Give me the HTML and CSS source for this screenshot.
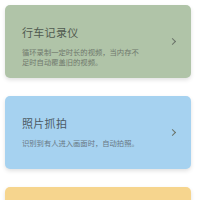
FILE: index.html
```html
<!DOCTYPE html>
<html lang="zh">
<head>
    <meta charset="UTF-8" />
    <title>功能</title>
    <link rel="stylesheet" href="styles.css">
</head>
<body>
<div class="list">
    <div class="card card-green">
        <div class="card-text">
            <h3>行车记录仪</h3>
            <p>循环录制一定时长的视频，当内存不足时自动覆盖旧的视频。</p>
        </div>
        <span class="arrow"></span>
    </div>

    <div class="card card-blue">
        <div class="card-text">
            <h3>照片抓拍</h3>
            <p>识别到有人进入画面时，自动拍照。</p>
        </div>
        <span class="arrow"></span>
    </div>

    <div class="card card-yellow">
        <div class="card-text">
            <h3>&nbsp;</h3>
        </div>
    </div>
</div>
</body>
</html>
```

FILE: styles.css
```css
body {
    margin: 0;
    background: #ffffff;
    font-family: "Noto Sans CJK SC", "Noto Sans", sans-serif;
    overflow: hidden;
}

.list {
    display: flex;
    flex-direction: column;
    gap: 18px;
    padding: 5px 9px 0 5px;
}

.card {
    height: 73px;
    box-sizing: border-box;
    border-radius: 5px;
    padding: 20px 0 0 17px;
    display: flex;
    position: relative;
    box-shadow: 0 2px 4px rgba(0, 0, 0, 0.12);
}

.card-green { background: #b0c4a8; }
.card-blue { background: #a6d2f0; }
.card-yellow { background: #f6d58e; }

.card-text h3 {
    margin: 0;
    font-size: 11px;
    line-height: 14px;
    font-weight: normal;
    color: #505a50;
    letter-spacing: 0.3px;
}

.card-text p {
    margin: 8px 0 0;
    width: 120px;
    font-size: 7.3px;
    line-height: 10px;
    color: #6f786c;
}

.card-blue .card-text h3 { color: #4d5a64; }
.card-blue .card-text p { color: #687884; }

.arrow {
    position: absolute;
    right: 16px;
    top: 34px;
    width: 4px;
    height: 4px;
    border-top: 1px solid #6a7268;
    border-right: 1px solid #6a7268;
    transform: rotate(45deg);
}
```
